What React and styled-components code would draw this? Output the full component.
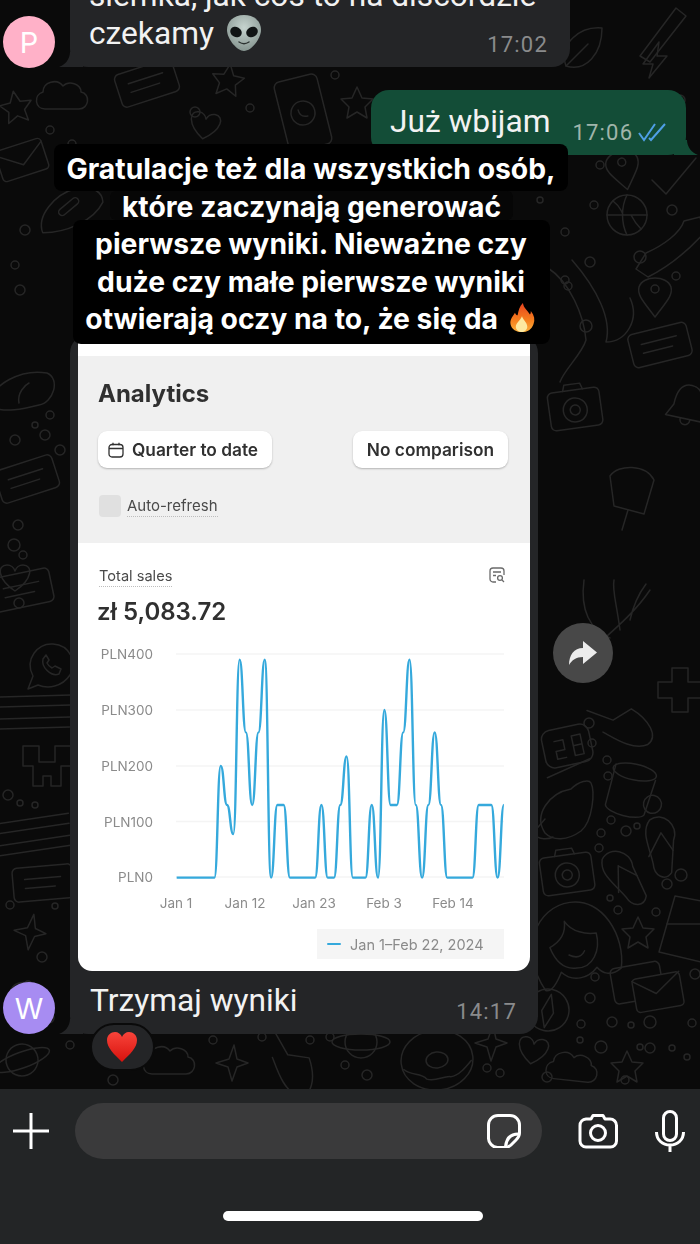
import React from 'react';
import styled, { createGlobalStyle } from 'styled-components';

const GlobalStyle = createGlobalStyle`
    html, body {
        margin: 0;
        padding: 0;
        background: #0a0a0a;
    }
    body {
        font-family: Inter, "Liberation Sans", sans-serif;
    }
`;

// daily sales, read off the chart
const SALES = [
    0, 0, 0, 0, 0, 0, 0, 200, 130, 78, 390, 260, 130, 260, 390, 0, 130, 130, 0, 0, 0, 0, 0, 130, 0, 0, 130,
    217, 0, 0, 0, 130, 0, 300, 130, 130, 260, 390, 130, 0, 130, 260, 130, 0, 0, 0, 0, 0, 130, 130, 130, 0, 130,
];

// every point has a flat tangent, which gives the shoulders of the original line
const bumpPath = (points) => {
    let d = `M${points[0][0]} ${points[0][1]}`;
    for (let i = 1; i < points.length; i++) {
        const [x0, y0] = points[i - 1];
        const [x1, y1] = points[i];
        const mid = (x0 + x1) / 2;
        d += `C${mid} ${y0} ${mid} ${y1} ${x1} ${y1}`;
    }
    return d;
};

const salesLine = bumpPath(SALES.map((v, i) => [98.67 + i * 6.293, 241.67 - v * 0.559]));

const Y_LABELS = [['PLN400', 18], ['PLN300', 74], ['PLN200', 130], ['PLN100', 185.5], ['PLN0', 241]];
const X_LABELS = [['Jan 1', 98], ['Jan 12', 167], ['Jan 23', 236], ['Feb 3', 306], ['Feb 14', 375]];

const DOODLES = {
    star: <path d="M0-16 5-5 16-4 8 4 10 15 0 9-10 15-8 4-16-4-5-5Z" />,
    sparkle: <path d="M2-18 5-4 16 0 5 4 0 18-4 4-16 0-3-4Z" />,
    heart: <path d="M0 14C-18 2-18-12-8-12c4 0 7 3 8 6 1-3 4-6 8-6 10 0 10 14-8 26Z" />,
    cloud: <path d="M-22 14c-10 0-12-14-2-17 0-10 14-14 20-6 6-6 18-2 18 6 10 2 8 17-2 17Z" />,
    card: <g><rect x="-30" y="-17" width="60" height="34" rx="5" /><path d="M-18-5H18M-18 4H12" /></g>,
    phone: <g><rect x="-22" y="-36" width="44" height="72" rx="6" /><circle r="12" /><path d="M-4-4c0 5 3 8 8 8" /></g>,
    whatsapp: <g><path d="M-22 22-17 9C-26-8-12-24 3-23 20-22 28-4 20 8 12 20-2 22-12 18Z" /><path d="M-7-8c-2 8 8 18 16 15l2-5-6-3-3 2c-2-1-4-3-5-5l2-3-3-5Z" /></g>,
    envelope: <g><rect x="-24" y="-16" width="48" height="32" rx="4" /><path d="M-24-12 0 5 24-12" /></g>,
    envelopes: <g><rect x="-34" y="-24" width="50" height="36" rx="5" /><rect x="-14" y="-10" width="48" height="34" rx="4" fill="#0a0a0a" /><path d="M-14-8 8 8 34-10" /></g>,
    ball: <g><circle r="20" /><path d="M-20 0H20M0-20C-6-8-6 8 0 20M-14-14C-6-8-4 0-4 0M14 14C8 8 4 0 4 0" /></g>,
    saturn: <g><circle r="16" /><ellipse rx="29" ry="8" /></g>,
    donut: <g><ellipse rx="36" ry="30" /><ellipse rx="11" ry="8" /><path d="M-34 6c8 8 16 4 22 12 8 4 18-2 24 0 8 0 16-8 22-14" /></g>,
    flop: <g><path d="M-16-22C-6-34 14-24 12-8L18 24C14 34 2 32-2 20-10 4-22-8-16-22Z" /><path d="M-2-12-8 14M-2-12 14 2" /></g>,
    camera: <g><rect x="-26" y="-18" width="52" height="38" rx="5" /><circle cy="2" r="12" /><circle cy="2" r="5" /><path d="M-10-18-8-24H8L10-18" /></g>,
    mug: <g><path d="M-22-22-24 20C-22 28 12 30 16 22L20-14" /><ellipse cx="-2" cy="-18" rx="22" ry="8" /><circle cx="22" cy="10" r="9" /></g>,
    face: <g><path d="M-36 46C-58 2-34-38 0-38 34-38 50 4 42 34 30 42 22 36 18 30 8 40-8 42-18 30-26 44-32 48-36 46Z" /><path d="M-26 4C-16 0-8-8-8-20-2-8 12-4 22-4 24 14 14 30-2 28-14 28-22 20-26 4Z" /><path d="M-8 14C-2 18 4 18 8 12" /></g>,
    compass: <g><circle r="21" /><path d="M0-16 6 2 0 18-6 2Z" /></g>,
    glass: <g><path d="M-12-34 30-26 14 32-28 22Z" /><path d="M-20-6 24-6" /></g>,
    clock: <g><rect x="-24" y="-18" width="48" height="38" rx="9" /><path d="M-12-6H-3V4H-12V12H-3M6-8H15V12H6ZM6 2H15M-26 28 20 18" /></g>,
    croissant: <g><path d="M-22 20C-34 2-18-20 4-24 12-32 22-34 24-30 28-22 26 8 14 18 0 28-14 28-22 20Z" /><path d="M-22 6-34 20C-28 28-18 26-14 24" /></g>,
    hat: <g><path d="M-32 18C-34 0-10-16 10-16 30-14 36-6 34 4 20 20-10 24-32 18Z" /><rect x="-12" y="-4" width="24" height="7" rx="3.5" transform="rotate(-25)" /></g>,
    bread: <g><path d="M-32 14C-34-10 0-24 24-20 38-14 30 10 16 12 0 16-18 20-32 14Z" /><path d="M-4 10C-6 0 2-8 6-10" /></g>,
    creeper: <path d="M-24-22H-8V-6H8V-22H24V-2H14V18H4V8H-4V18H-14V-2H-24Z" />,
    bars: <path d="M-36-16 40-22M-36-6 40-12M-36 6 40 0M-36 16 40 10" />,
    shoe: <g><path d="M-34 22-24 6C-6-2 10-14 14-26L30-30 34-14C14 8-6 22-22 30Z" /></g>,
    pin: <g><path d="M0 22C-12 6-18 0-16-8-12-20 12-20 16-8 18 0 12 6 0 22Z" /><circle cy="-6" r="4" /></g>,
    tentacle: <g><path d="M-42-52C-20-38-6-4-4 20-8 34-26 50-30 62M-18-60C8-30 22 0 16 22 36 22 50 0 40-22" /><circle cx="-4" cy="6" r="6" /><circle cx="-22" cy="-34" r="4" /></g>,
    bell: <path d="M0-20C-12-20-14-8-14 2L-20 14H20L14 2C14-8 12-20 0-20ZM-5 14C-5 22 5 22 5 14" />,
    icecream: <g><path d="M-22-24C-14-36 14-36 22-20L12 14-18 6Z" /><path d="M-4 10-10 30" /></g>,
    hand: <path d="M-30-20-6-6 14-14C30 0 36 18 24 24 8 28-10 10-18 4" />,
    leaf: <g><path d="M-14 16C-22-6 0-24 22-22 22 4 6 22-14 16Z" /><path d="M-14 16 8-6" /></g>,
    bolt: <path d="M4-18-12 4H-2L-6 18 12-4H2Z" />,
    tick: <path d="M-20 0-6 14 24-22" />,
    brush: <g><path d="M-20 26 16-22 26-14-10 32Z" /></g>,
    plus: <path d="M-8-22H8V-8H22V8H8V22H-8V8H-22V-8H-8Z" />,
    antler: <path d="M-50 60C-20 30 10 10 30-20M0 20C-4-10-8-20-6-30M10 10C14-8 20-18 26-26M-10 28C-30 20-40 0-36-30" />,
};

const PLACED = [
    ['cloud', 67, 95], ['star', 16, 107, -10], ['star', 228, 80, 8], ['star', 357, 103], ['heart', 205, 125, 10], ['card', 147, 83, -18],
    ['phone', 303, 113, -14], ['envelope', 22, 160, -18], ['hat', 69, 207, -15], ['brush', 660, 30], ['leaf', 580, 50], ['bolt', 655, 60],
    ['pin', 623, 168, -12], ['ball', 627, 215], ['tick', 672, 180], ['shoe', 670, 247], ['tentacle', 590, 320], ['pin', 655, 295],
    ['card', 660, 345, -14], ['bread', 23, 393], ['camera', 575, 408, -8], ['bell', 688, 405, 12], ['card', 27, 479, -18], ['icecream', 632, 500],
    ['heart', 15, 577], ['whatsapp', 50, 667], ['bars', 30, 715, 3], ['creeper', 47, 768], ['bars', 30, 838, -4], ['card', 43, 883, -5],
    ['sparkle', 30, 932, 6], ['hand', 620, 725, -10], ['plus', 680, 690], ['clock', 567, 745, -12], ['mug', 633, 790, 12], ['croissant', 567, 813],
    ['camera', 567, 873, -8], ['flop', 623, 877, -14], ['flop', 660, 845, 14], ['face', 575, 940, -8], ['star', 638, 933], ['glass', 687, 930],
    ['envelopes', 647, 987, -10], ['compass', 548, 1010, 12], ['cloud', 577, 1067, 6], ['star', 627, 1067], ['saturn', 22, 1060, -20],
    ['cloud', 174, 1060], ['sparkle', 232, 1063], ['hand', 290, 1063, 30], ['saturn', 361, 1042], ['donut', 437, 1060, -6], ['sparkle', 491, 1043],
    ['heart', 533, 1050, 10], ['card', 22, 590, -12], ['antler', 620, 610], ['pin', 25, 1000, 20],
];

const BUBBLES = [
    [72, 144, 4], [50, 130, 4], [195, 112, 5], [250, 108, 4], [335, 75, 4], [615, 130, 4], [640, 140, 5], [590, 150, 4], [600, 165, 4], [672, 210, 5],
    [594, 205, 4], [540, 200, 3], [565, 232, 4], [590, 262, 5], [565, 280, 4], [640, 257, 6], [676, 276, 4], [25, 230, 5], [15, 265, 4], [680, 100, 5],
    [20, 290, 5], [45, 435, 5], [35, 425, 3], [50, 415, 4], [15, 440, 5], [60, 450, 5], [18, 525, 5], [14, 545, 6], [23, 555, 4], [19, 603, 5],
    [8, 795, 5], [20, 803, 3], [35, 805, 3], [10, 905, 4], [55, 906, 3], [42, 957, 5], [28, 985, 4], [49, 1018, 5], [589, 723, 5], [592, 743, 4],
    [607, 760, 4], [608, 776, 4], [611, 820, 4], [601, 833, 4], [626, 831, 5], [637, 826, 3], [599, 848, 4], [610, 898, 3], [618, 910, 4], [656, 912, 4],
    [681, 875, 6], [667, 884, 5], [695, 974, 5], [595, 977, 4], [590, 998, 5], [581, 1024, 4], [612, 1022, 5], [631, 1025, 3], [650, 1022, 6], [692, 1023, 4],
    [650, 1048, 5], [601, 1047, 6], [640, 1047, 3], [672, 1048, 3], [687, 1057, 3], [70, 1045, 4], [113, 1080, 5], [213, 1040, 4], [262, 1037, 4], [310, 1040, 4],
    [330, 1037, 4], [367, 1075, 5], [345, 1065, 4], [487, 1068, 4], [500, 1073, 4], [547, 1077, 5], [625, 1080, 4], [580, 1040, 3],
];

const Wallpaper = () => (
    <WallpaperSvg viewBox="0 0 700 1089" aria-hidden="true">
        {PLACED.map(([name, x, y, rotate = 0], i) => (
            <g key={i} transform={`translate(${x} ${y}) rotate(${rotate})`}>{DOODLES[name]}</g>
        ))}
        {BUBBLES.map(([cx, cy, r], i) => <circle key={i} cx={cx} cy={cy} r={r} />)}
    </WallpaperSvg>
);

const AlienEmoji = () => (
    <EmojiSvg size={38} $gap={11} viewBox="0 0 38 38">
        <defs>
            <radialGradient id="alien" cx="50%" cy="35%" r="70%">
                <stop offset="0" stopColor="#c6d4cf" />
                <stop offset="1" stopColor="#82918c" />
            </radialGradient>
        </defs>
        <path d="M19 1C8 1 2 8 2 16c0 9 10 21 17 21s17-12 17-21C36 8 30 1 19 1Z" fill="url(#alien)" />
        <ellipse cx="11" cy="18" rx="6" ry="5" fill="#101414" transform="rotate(30 11 18)" />
        <ellipse cx="27" cy="18" rx="6" ry="5" fill="#101414" transform="rotate(-30 27 18)" />
        <path d="M14 28c3 2 7 2 10 0" fill="none" stroke="#2c3331" strokeWidth="1.4" strokeLinecap="round" />
    </EmojiSvg>
);

const FireEmoji = () => (
    <EmojiSvg size={30} $gap={2} viewBox="0 0 30 34">
        <defs>
            <linearGradient id="fire" x1="0" y1="0" x2="0" y2="1">
                <stop offset="0" stopColor="#e8431f" />
                <stop offset="0.6" stopColor="#f5801e" />
                <stop offset="1" stopColor="#fbb03b" />
            </linearGradient>
        </defs>
        <path d="M16 0c1 6 5 8 8 13 1-1 1-3 1-4 4 5 5 10 3 15-2 6-7 9-13 9S3 30 2 24C1 18 5 15 7 11c1 2 2 3 3 3 1-5 2-10 6-14Z" fill="url(#fire)" />
        <path d="M15 15c1 4 6 7 6 12 0 3-3 6-6 6s-7-2-7-6c0-4 5-7 7-12Z" fill="#fde9a0" />
    </EmojiSvg>
);

const HeartEmoji = () => (
    <EmojiSvg size={30} viewBox="0 0 30 30">
        <defs>
            <linearGradient id="heart" x1="0" y1="0" x2="0" y2="1">
                <stop offset="0" stopColor="#f8443a" />
                <stop offset="1" stopColor="#d8120d" />
            </linearGradient>
        </defs>
        <path d="M15 30C7 22 0 16 0 8 0 3 4 0 8 0c3 0 6 2 7 5 1-3 4-5 7-5 4 0 8 3 8 8 0 8-7 14-15 22Z" fill="url(#heart)" />
    </EmojiSvg>
);

const App = () => {
    return (
        <Page>
            <GlobalStyle />
            <ChatArea>
                <Wallpaper />

                <IncomingRow>
                    <Avatar color="#ffb1c8">P</Avatar>
                    <Bubble width={500}>
                        <MessageText>siemka, jak coś to na discordzie</MessageText>
                        <BubbleFooter>
                            <MessageText $lift={4}>czekamy<AlienEmoji /></MessageText>
                            <Time>17:02</Time>
                        </BubbleFooter>
                    </Bubble>
                </IncomingRow>

                <OutgoingRow>
                    <SentBubble>
                        <MessageText $lift={6}>Już wbijam</MessageText>
                        <Time $sent>17:06</Time>
                        <TickIcon viewBox="0 0 28 20">
                            <path d="M1 11l5 7L17 2M11 16l2 2L27 2" />
                        </TickIcon>
                    </SentBubble>
                </OutgoingRow>

                <ImageRow>
                    <Avatar color="#a78cf2">W</Avatar>
                    <Bubble width={468} $image>
                        <AnalyticsCard>
                            <GraySection>
                                <CardTitle>Analytics</CardTitle>
                                <ButtonRow>
                                    <CardButton>
                                        <SmallIcon viewBox="0 0 16 16">
                                            <rect x="1" y="2.5" width="14" height="12.5" rx="3" />
                                            <path d="M1 6.5h14M5 .8v2.4M11 .8v2.4" />
                                        </SmallIcon>
                                        Quarter to date
                                    </CardButton>
                                    <CardButton>No comparison</CardButton>
                                </ButtonRow>
                                <RefreshRow>
                                    <FakeCheckbox />
                                    <DottedLabel>Auto-refresh</DottedLabel>
                                </RefreshRow>
                            </GraySection>
                            <WhiteSection>
                                <SalesHeader>
                                    <DottedLabel $small>Total sales</DottedLabel>
                                    <SmallIcon viewBox="0 0 16 16">
                                        <path d="M7 15H4a3 3 0 0 1-3-3V4a3 3 0 0 1 3-3h8a3 3 0 0 1 3 3v4" />
                                        <path d="M4 5h8M4 8.5h3" />
                                        <circle cx="11" cy="11" r="2.4" />
                                        <path d="M13 13l2 2" />
                                    </SmallIcon>
                                </SalesHeader>
                                <SalesValue>zł 5,083.72</SalesValue>
                                <ChartSvg viewBox="0 0 452 280">
                                    {Y_LABELS.map(([label, y]) => (
                                        <g key={label}>
                                            <line x1="98" x2="426" y1={y} y2={y} stroke="#f4f4f4" strokeWidth="1.5" />
                                            <ChartLabel x="75" y={y + 5} textAnchor="end">{label}</ChartLabel>
                                        </g>
                                    ))}
                                    {X_LABELS.map(([label, x]) => (
                                        <ChartLabel key={label} x={x} y="272" textAnchor="middle">{label}</ChartLabel>
                                    ))}
                                    <path d={salesLine} fill="none" stroke="#35a9dc" strokeWidth="2.4" />
                                </ChartSvg>
                                <Legend>
                                    <LegendDash />
                                    Jan 1–Feb 22, 2024
                                </Legend>
                            </WhiteSection>
                        </AnalyticsCard>
                        <BubbleFooter $image>
                            <MessageText $lift={4}>Trzymaj wyniki</MessageText>
                            <Time>14:17</Time>
                        </BubbleFooter>
                        <Reaction><HeartEmoji /></Reaction>
                    </Bubble>
                    <ForwardButton>
                        <svg width="30" height="26" viewBox="0 0 30 26">
                            <path d="M15 1l14 11.5L15 24v-7C8 17 4 20 1 25 1 15 6 8 15 8Z" fill="#ececec" />
                        </svg>
                    </ForwardButton>
                </ImageRow>

                <Caption>
                    <CaptionTop>Gratulacje też dla wszystkich osób,</CaptionTop>
                    <CaptionMiddle>które zaczynają generować</CaptionMiddle>
                    <CaptionBlock>
                        pierwsze wyniki. Nieważne czy<br />
                        duże czy małe pierwsze wyniki<br />
                        otwierają oczy na to, że się da <FireEmoji />
                    </CaptionBlock>
                </Caption>
            </ChatArea>

            <Composer>
                <ComposerRow>
                    <ComposerIcon width="38" height="38" viewBox="0 0 38 38">
                        <path d="M19 1v36M1 19h36" />
                    </ComposerIcon>
                    <InputPill>
                        <ComposerIcon width="34" height="34" viewBox="0 0 34 34">
                            <path d="M11 1.5h12a9.5 9.5 0 0 1 9.5 9.5v8c0 3-1.5 5-3.5 7l-5 5c-2 2-4 2.5-7 2.5h-6.5A9.5 9.5 0 0 1 1.5 23.5V11A9.5 9.5 0 0 1 11 1.5Z" />
                            <path d="M32.5 20c-8-.5-13 3-14 13" />
                        </ComposerIcon>
                    </InputPill>
                    <ComposerIcon width="40" height="36" viewBox="0 0 40 36">
                        <path d="M13 6l2-3.5h10L27 6h5a6.5 6.5 0 0 1 6.5 6.5V28a6 6 0 0 1-6 6H8a6 6 0 0 1-6-6V12.5A6.5 6.5 0 0 1 8 6Z" />
                        <circle cx="20" cy="20" r="7.5" />
                    </ComposerIcon>
                    <MicIcon width="30" height="42" viewBox="0 0 30 42">
                        <rect x="8.5" y="1.5" width="13" height="29" rx="6.5" />
                        <path d="M1.5 22c0 8 6 13 13.5 13s13.5-5 13.5-13M15 35v7" />
                    </MicIcon>
                </ComposerRow>
                <HomeIndicator />
            </Composer>
        </Page>
    );
};

export default App;

const Page = styled.div`
    width: 700px;
    height: 1244px;
    overflow: hidden;
    display: flex;
    flex-direction: column;
`;
const ChatArea = styled.div`
    position: relative;
    height: 1089px;
    flex-shrink: 0;
    overflow: hidden;
    background-color: #0a0a0a;
`;
const WallpaperSvg = styled.svg`
    position: absolute;
    inset: 0;
    width: 700px;
    height: 1089px;
    fill: none;
    stroke: #262626;
    stroke-width: 1.5;
    stroke-linejoin: round;
    stroke-linecap: round;
`;
const IncomingRow = styled.div`
    position: relative;
    display: flex;
    align-items: flex-end;
    gap: 15px;
    padding-left: 3px;
    margin-top: -23px;
`;
const OutgoingRow = styled.div`
    position: relative;
    display: flex;
    justify-content: flex-end;
    padding-right: 14px;
    margin-top: 23px;
`;
const ImageRow = styled(IncomingRow)`
    margin-top: 180px;
`;
const Avatar = styled.div`
    width: 52px;
    height: 52px;
    flex-shrink: 0;
    margin-bottom: -1px;
    border-radius: 50%;
    background-color: ${(props) => props.color};
    color: #fff;
    font-size: 29px;
    display: grid;
    place-items: center;
    ${ImageRow} & {
        margin-bottom: 0;
    }
`;
const Bubble = styled.div`
    position: relative;
    width: ${(props) => props.width}px;
    box-sizing: border-box;
    padding: ${(props) => (props.$image ? '8px 8px 0' : '0 22px 10px 19px')};
    border-radius: 18px;
    background-color: #242527;
    &::before {
        content: '';
        position: absolute;
        left: -11px;
        bottom: 0;
        width: 24px;
        height: 15px;
        background-color: #242527;
        clip-path: path('M0 15C6 13 11 7 11 0H24V15Z');
    }
`;
const SentBubble = styled.div`
    position: relative;
    width: 315px;
    height: 65px;
    box-sizing: border-box;
    display: flex;
    align-items: flex-end;
    padding: 0 18px 8px 19px;
    border-radius: 18px;
    background-color: #134d37;
    &::after {
        content: '';
        position: absolute;
        right: -12px;
        bottom: 0;
        width: 24px;
        height: 15px;
        background-color: #134d37;
        clip-path: path('M24 15C18 13 13 7 13 0H0V15Z');
    }
`;
const MessageText = styled.div`
    font-family: Roboto, "Liberation Sans", sans-serif;
    font-size: 31.7px;
    line-height: 38px;
    margin-bottom: ${(props) => props.$lift || 0}px;
    color: #f2f2f2;
    white-space: nowrap;
`;
const EmojiSvg = styled.svg.attrs((props) => ({ width: props.size, height: props.size }))`
    vertical-align: middle;
    margin: -6px 0 0 ${(props) => props.$gap || 0}px;
`;
const BubbleFooter = styled.div`
    display: flex;
    justify-content: space-between;
    align-items: flex-end;
    padding: ${(props) => (props.$image ? '11px 13px 10px 12px' : '0')};
`;
const Time = styled.span`
    font-family: Roboto, "Liberation Sans", sans-serif;
    font-size: 22px;
    line-height: 24px;
    letter-spacing: 1.2px;
    color: ${(props) => (props.$sent ? '#a0b5ab' : '#8a8b8c')};
    margin-left: ${(props) => (props.$sent ? '22px' : '0')};
    margin-bottom: ${(props) => (props.$sent ? '2px' : '0')};
`;
const TickIcon = styled.svg`
    width: 28px;
    height: 20px;
    margin: 0 0 5px 5px;
    fill: none;
    stroke: #4f9fe6;
    stroke-width: 2;
`;
const AnalyticsCard = styled.div`
    width: 452px;
    height: 628px;
    padding-top: 13px;
    box-sizing: border-box;
    border-radius: 0 0 14px 14px;
    overflow: hidden;
    background-color: #fff;
    color: #303030;
    filter: blur(0.4px);
`;
const GraySection = styled.div`
    display: flex;
    flex-direction: column;
    padding: 23px 22px 26px 20px;
    background-color: #f0f0f0;
`;
const CardTitle = styled.div`
    font-size: 24px;
    line-height: 30px;
    font-weight: 700;
    margin-bottom: 22px;
`;
const ButtonRow = styled.div`
    display: flex;
    justify-content: space-between;
    margin-bottom: 27px;
`;
const CardButton = styled.div`
    display: flex;
    align-items: center;
    gap: 8px;
    height: 37px;
    padding: 0 14px 0 10px;
    border-radius: 9px;
    background-color: #fff;
    box-shadow: 0 1px 2px rgba(0, 0, 0, 0.25);
    font-size: 17.3px;
    font-weight: 600;
    &:last-child {
        padding: 0 14px;
    }
`;
const SmallIcon = styled.svg`
    width: 16px;
    height: 16px;
    fill: none;
    stroke: currentColor;
    stroke-width: 1.3;
`;
const RefreshRow = styled.div`
    display: flex;
    align-items: center;
    gap: 6px;
`;
const FakeCheckbox = styled.div`
    width: 22px;
    height: 22px;
    margin-left: 1px;
    border-radius: 4px;
    background-color: #e0e0e0;
`;
const DottedLabel = styled.span`
    font-size: ${(props) => (props.$small ? '14.6px' : '15px')};
    line-height: 18px;
    color: #4a4a4a;
    padding-top: ${(props) => (props.$small ? '0' : '2px')};
    padding-bottom: 1px;
    border-bottom: 1.5px dotted #bdbdbd;
`;
const WhiteSection = styled.div`
    padding: 24px 25px 0 21px;
`;
const SalesHeader = styled.div`
    display: flex;
    justify-content: space-between;
    align-items: flex-start;
    color: #6b6b6b;
`;
const SalesValue = styled.div`
    font-size: 24px;
    line-height: 30px;
    font-weight: 600;
    margin: 10px 0 0 -2px;
`;
const ChartSvg = styled.svg`
    display: block;
    width: 452px;
    height: 280px;
    margin: 9px 0 13px -21px;
`;
const ChartLabel = styled.text`
    font-family: Inter, "Liberation Sans", sans-serif;
    font-size: 13.5px;
    fill: #8b8b8b;
`;
const Legend = styled.div`
    display: flex;
    align-items: center;
    gap: 9px;
    width: 187px;
    height: 30px;
    box-sizing: border-box;
    margin-left: auto;
    margin-right: 1px;
    padding-left: 10px;
    background-color: #f5f5f5;
    color: #8a8a8a;
    font-size: 14.5px;
    white-space: nowrap;
`;
const LegendDash = styled.span`
    width: 14px;
    height: 2.5px;
    border-radius: 2px;
    background-color: #35a9dc;
`;
const Reaction = styled.div`
    position: absolute;
    left: 20px;
    bottom: -37px;
    width: 65px;
    height: 48px;
    box-sizing: border-box;
    border: 2px solid #0a0a0a;
    border-radius: 24px;
    background-color: #242527;
    display: grid;
    place-items: center;
    padding-right: 2px;
    svg {
        margin-top: 0;
    }
`;
const ForwardButton = styled.div`
    position: absolute;
    top: 288px;
    left: 553px;
    width: 60px;
    height: 60px;
    border-radius: 50%;
    background-color: #484848;
    display: grid;
    place-items: center;
`;
const Caption = styled.div`
    position: absolute;
    top: 144px;
    left: 0;
    width: 622px;
    display: flex;
    flex-direction: column;
    align-items: center;
    font-size: 28.3px;
    font-weight: 700;
    color: #fff;
    text-align: center;
    white-space: nowrap;
`;
const CaptionTop = styled.div`
    width: 514px;
    height: 47px;
    box-sizing: border-box;
    padding-top: 6px;
    line-height: 38px;
    border-radius: 8px;
    background-color: #000;
`;
const CaptionMiddle = styled.div`
    position: relative;
    z-index: 1;
    width: 403px;
    height: 29px;
    line-height: 32px;
    border-radius: 6px;
    background-color: #060606;
    margin-left: 1px;
`;
const CaptionBlock = styled.div`
    width: 477px;
    box-sizing: border-box;
    padding: 6px 0 5px;
    line-height: 37.5px;
    border-radius: 8px;
    background-color: #000;
`;
const Composer = styled.div`
    flex: 1;
    background-color: #232526;
    padding-top: 14px;
`;
const ComposerRow = styled.div`
    display: flex;
    align-items: center;
    padding-left: 12px;
`;
const ComposerIcon = styled.svg`
    flex-shrink: 0;
    fill: none;
    stroke: #fff;
    stroke-width: 3;
    stroke-linejoin: round;
`;
const MicIcon = styled(ComposerIcon)`
    margin-left: 37px;
`;
const InputPill = styled.div`
    width: 467px;
    height: 56px;
    box-sizing: border-box;
    margin: 0 36px 0 25px;
    padding-right: 21px;
    border-radius: 28px;
    background-color: #3a3a3b;
    display: flex;
    align-items: center;
    justify-content: flex-end;
`;
const HomeIndicator = styled.div`
    width: 260px;
    height: 10px;
    margin: 52px 0 0 223px;
    border-radius: 5px;
    background-color: #fff;
`;
